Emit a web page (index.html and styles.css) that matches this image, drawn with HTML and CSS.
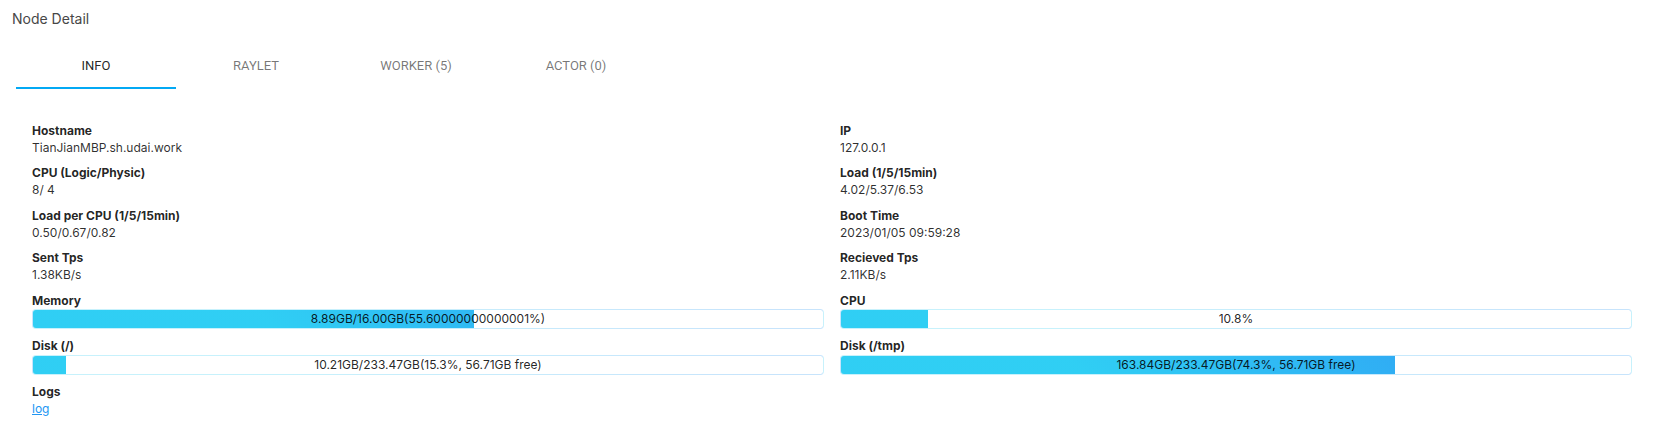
FILE: index.html
```html
<!DOCTYPE html>
<html lang="en">
<head>
<meta charset="utf-8">
<title>Node Detail</title>
<link rel="stylesheet" href="styles.css">
</head>
<body>
<div class="page">
  <div class="title">Node Detail</div>
  <div class="tabs">
    <div class="tab tab-active">INFO</div>
    <div class="tab">RAYLET</div>
    <div class="tab">WORKER (5)</div>
    <div class="tab">ACTOR (0)</div>
  </div>
  <div class="info-grid">
    <div class="item"><div class="label">Hostname</div><div class="value">TianJianMBP.sh.udai.work</div></div>
    <div class="item"><div class="label">IP</div><div class="value">127.0.0.1</div></div>
    <div class="item"><div class="label">CPU (Logic/Physic)</div><div class="value">8/ 4</div></div>
    <div class="item"><div class="label">Load (1/5/15min)</div><div class="value">4.02/5.37/6.53</div></div>
    <div class="item"><div class="label">Load per CPU (1/5/15min)</div><div class="value">0.50/0.67/0.82</div></div>
    <div class="item"><div class="label">Boot Time</div><div class="value">2023/01/05 09:59:28</div></div>
    <div class="item"><div class="label">Sent Tps</div><div class="value">1.38KB/s</div></div>
    <div class="item"><div class="label">Recieved Tps</div><div class="value">2.11KB/s</div></div>
    <div class="item item-first-bar">
      <div class="label">Memory</div>
      <div class="bar"><div class="bar-rest" style="width: 44.2%"></div><div class="bar-text">8.89GB/16.00GB(55.60000000000001%)</div></div>
    </div>
    <div class="item item-first-bar">
      <div class="label">CPU</div>
      <div class="bar"><div class="bar-rest" style="width: 89.0%"></div><div class="bar-text">10.8%</div></div>
    </div>
    <div class="item">
      <div class="label">Disk (/)</div>
      <div class="bar"><div class="bar-rest" style="width: 95.8%"></div><div class="bar-text">10.21GB/233.47GB(15.3%, 56.71GB free)</div></div>
    </div>
    <div class="item">
      <div class="label">Disk (/tmp)</div>
      <div class="bar"><div class="bar-rest" style="width: 29.83%"></div><div class="bar-text">163.84GB/233.47GB(74.3%, 56.71GB free)</div></div>
    </div>
    <div class="item"><div class="label">Logs</div><div class="value"><a class="link" href="#">log</a></div></div>
  </div>
</div>
</body>
</html>
```
FILE: styles.css
```css
* { box-sizing: border-box; }
html, body { margin: 0; padding: 0; background: #fff; }
body {
  font-family: Inter, "Noto Sans", "Liberation Sans", sans-serif;
  color: rgba(0, 0, 0, 0.87);
}
.page { width: 1666px; }
.title {
  padding: 7px 12px 10px;
  font-size: 14px;
  line-height: 24px;
  color: #474747;
}
.tabs {
  display: flex;
  padding-left: 16px;
  height: 48px;
}
.tab {
  width: 160px;
  height: 48px;
  display: flex;
  align-items: center;
  justify-content: center;
  font-family: Roboto, "Liberation Sans", sans-serif;
  font-size: 13px;
  color: rgba(0, 0, 0, 0.54);
  border-bottom: 2px solid transparent;
  padding-top: 2px;
}
.tab-active {
  color: rgba(0, 0, 0, 0.87);
  border-bottom-color: #03a9f4;
}
.info-grid {
  display: grid;
  grid-template-columns: 792px 792px;
  column-gap: 16px;
  row-gap: 8px;
  padding: 33px 34px 0 32px;
  font-size: 12px;
  line-height: 17.16px;
}
.item-first-bar { margin-top: 1px; }
.label { font-weight: 700; color: rgba(0, 0, 0, 0.87); }
.value { color: rgba(0, 0, 0, 0.82); }
.link { color: #2196f3; text-decoration: underline; }
.bar {
  position: relative;
  height: 20px;
  padding: 0 12px;
  border: 1px solid #ffffffbb;
  border-radius: 4px;
  background: linear-gradient(45deg, #21cbf3ee 30%, #2196f3ee 90%);
}
.bar-rest {
  position: absolute;
  top: 0;
  right: 0;
  height: 18px;
  background: #fff;
  border-radius: 0 2px 2px 0;
}
.bar-text {
  position: relative;
  z-index: 2;
  width: 100%;
  text-align: center;
  font-size: 12px;
  line-height: 18px;
  color: rgba(0, 0, 0, 0.87);
}
```
